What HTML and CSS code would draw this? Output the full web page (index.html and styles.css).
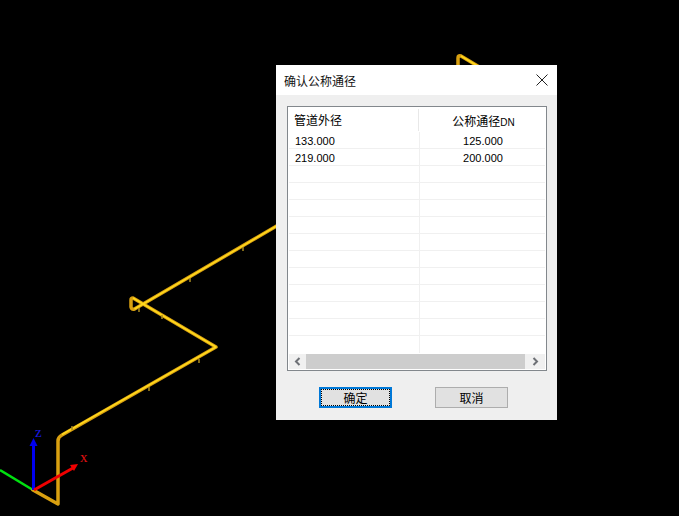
FILE: index.html
```html
<!DOCTYPE html>
<html>
  <head>
    <title>确认公称通径</title>
    <link rel="stylesheet" href="styles.css">
  </head>
  <body>
    <svg class="scene" width="679" height="516" viewBox="0 0 679 516">
      <line x1="0" y1="470" x2="33" y2="490" stroke="#00e010" stroke-width="2.5"/>
      <g fill="none" stroke="#d9a010" stroke-width="3.5" stroke-linejoin="round" stroke-linecap="round">
        <path d="M33 490 L58 504 L58 441 Q58 437 62 435 L216 347 L133 298 Q131 298 131 300 L131 307 Q131.500 310 134.500 309 L280 224"/>
        <path d="M458 66 L458 58 Q458 55 461 56 L481 68"/>
      </g>
      <g fill="none" stroke="#ffd81c" stroke-width="1.500" stroke-linejoin="round">
        <path d="M62 434.500 L216 347 L133 298 M134.500 309 L280 224"/>
        <path d="M461 56 L481 68"/>
      </g>
      <g stroke="#a88a20" stroke-width="1.5">
        <line x1="72" y1="426" x2="72" y2="430"/>
        <line x1="149" y1="387" x2="149" y2="391"/>
        <line x1="199" y1="359" x2="199" y2="363"/>
        <line x1="162" y1="315" x2="162" y2="319"/>
        <line x1="139" y1="308" x2="139" y2="312"/>
        <line x1="190" y1="278" x2="190" y2="282"/>
        <line x1="243" y1="247" x2="243" y2="251"/>
      </g>
      <line x1="33.500" y1="490" x2="33.500" y2="443" stroke="#0000f0" stroke-width="3"/>
      <polygon points="33.500,438 29.500,446 37.500,446" fill="#0000f0"/>
      <line x1="34" y1="490" x2="73" y2="468" stroke="#f00000" stroke-width="3"/>
      <polygon points="78,464 70,465 74,471" fill="#f00000"/>
      <text class="axis-z" x="35" y="437">z</text>
      <text class="axis-x" x="80" y="462">x</text>
    </svg>

    <div class="dialog">
      <div class="title-bar">
        <span>确认公称通径</span>
        <svg class="close-icon" width="12" height="12" viewBox="0 0 12 12">
          <path d="M0.500 0.500 L11.500 11.500 M11.500 0.500 L0.500 11.500" stroke="#222" stroke-width="1" fill="none"/>
        </svg>
      </div>
      <div class="dialog-body">
        <div class="list-box">
          <div class="list-header">
            <div class="col-left">管道外径</div>
            <div class="col-right">公称通径<small>DN</small></div>
          </div>
          <div class="list-rows">
            <div class="row"><div class="col-left">133.000</div><div class="col-right">125.000</div></div>
            <div class="row"><div class="col-left">219.000</div><div class="col-right">200.000</div></div>
            <div class="row"><div class="col-left"></div><div class="col-right"></div></div>
            <div class="row"><div class="col-left"></div><div class="col-right"></div></div>
            <div class="row"><div class="col-left"></div><div class="col-right"></div></div>
            <div class="row"><div class="col-left"></div><div class="col-right"></div></div>
            <div class="row"><div class="col-left"></div><div class="col-right"></div></div>
            <div class="row"><div class="col-left"></div><div class="col-right"></div></div>
            <div class="row"><div class="col-left"></div><div class="col-right"></div></div>
            <div class="row"><div class="col-left"></div><div class="col-right"></div></div>
            <div class="row"><div class="col-left"></div><div class="col-right"></div></div>
            <div class="row"><div class="col-left"></div><div class="col-right"></div></div>
            <div class="row last"><div class="col-left"></div><div class="col-right"></div></div>
          </div>
          <div class="scroll-bar">
            <div class="scroll-btn">
              <svg width="7" height="9" viewBox="0 0 7 9"><path d="M5.500 1 L2 4.500 L5.500 8" stroke="#6e7176" stroke-width="2" fill="none"/></svg>
            </div>
            <div class="scroll-thumb"></div>
            <div class="scroll-btn scroll-btn-right">
              <svg width="7" height="9" viewBox="0 0 7 9"><path d="M1.500 1 L5 4.500 L1.500 8" stroke="#6e7176" stroke-width="2" fill="none"/></svg>
            </div>
          </div>
        </div>
        <div class="button-row">
          <button class="btn btn-default"><span>确定</span></button>
          <button class="btn">取消</button>
        </div>
      </div>
    </div>
  </body>
</html>
```

FILE: styles.css
```css
body {
  margin: 0;
  width: 679px;
  height: 516px;
  overflow: hidden;
  background-color: #000;
  font-family: "Noto Sans CJK SC", "Liberation Sans", sans-serif;
  font-size: 12px;
  color: #000;
}

.scene {
  position: absolute;
  left: 0;
  top: 0;
}

.axis-z,
.axis-x {
  font-family: "Liberation Serif", serif;
  font-size: 15px;
}

.axis-z {
  fill: #1a1ae0;
}

.axis-x {
  fill: #e01010;
}

.dialog {
  position: absolute;
  left: 276px;
  top: 65px;
  width: 281px;
  height: 355px;
  display: flex;
  flex-direction: column;
  background-color: #efefef;
}

.title-bar {
  height: 30px;
  flex: none;
  display: flex;
  align-items: center;
  justify-content: space-between;
  padding: 0 9px 0 8px;
  background-color: #fff;
  color: #111;
}

.dialog-body {
  flex: 1;
  padding: 11px 10px 0 11px;
}

.list-box {
  height: 265px;
  box-sizing: border-box;
  border: 1px solid #82878c;
  background-color: #fff;
  padding: 1px;
  display: flex;
  flex-direction: column;
}

.list-header {
  height: 24px;
  flex: none;
  display: flex;
  align-items: center;
}

.list-header .col-left {
  height: 22px;
  line-height: 22px;
  border-right: 1px solid #e8e8e8;
  width: 130px;
  padding-left: 5px;
}

.list-header .col-right {
  padding-left: 3px;
}

.list-header small {
  font-family: "Liberation Sans", sans-serif;
  font-size: 10px;
}

.col-left {
  width: 131px;
  box-sizing: border-box;
  flex: none;
  padding-left: 6px;
}

.col-right {
  flex: 1;
  text-align: center;
  padding-left: 1px;
}

.list-rows {
  flex: 1;
  min-height: 0;
}

.row {
  height: 17px;
  box-sizing: border-box;
  display: flex;
  line-height: 18px;
  border-bottom: 1px solid #f0f0f0;
  font-family: "Liberation Sans", sans-serif;
  font-size: 11px;
}

.row .col-left {
  border-right: 1px solid #f0f0f0;
}

.row.last {
  border-bottom: none;
}

.scroll-bar {
  height: 15px;
  flex: none;
  display: flex;
  background-color: #f0f0f0;
}

.scroll-btn {
  width: 17px;
  flex: none;
  display: flex;
  align-items: center;
  justify-content: center;
}

.scroll-btn-right {
  width: 20px;
}

.scroll-thumb {
  flex: 1;
  background-color: #cdcdcd;
}

.button-row {
  display: flex;
  gap: 43px;
  padding: 16px 0 0 32px;
}

.btn {
  width: 73px;
  height: 21px;
  padding: 0;
  box-sizing: border-box;
  border: 1px solid #adadad;
  border-radius: 0;
  background-color: #e1e1e1;
  font-family: "Noto Sans CJK SC", sans-serif;
  font-size: 12px;
  line-height: 17px;
  color: #000;
}

.btn-default {
  border: 2px solid #0078d7;
}

.btn-default span {
  display: block;
  height: 17px;
  box-sizing: border-box;
  outline: 1px dotted #000;
  outline-offset: -1px;
}
```
